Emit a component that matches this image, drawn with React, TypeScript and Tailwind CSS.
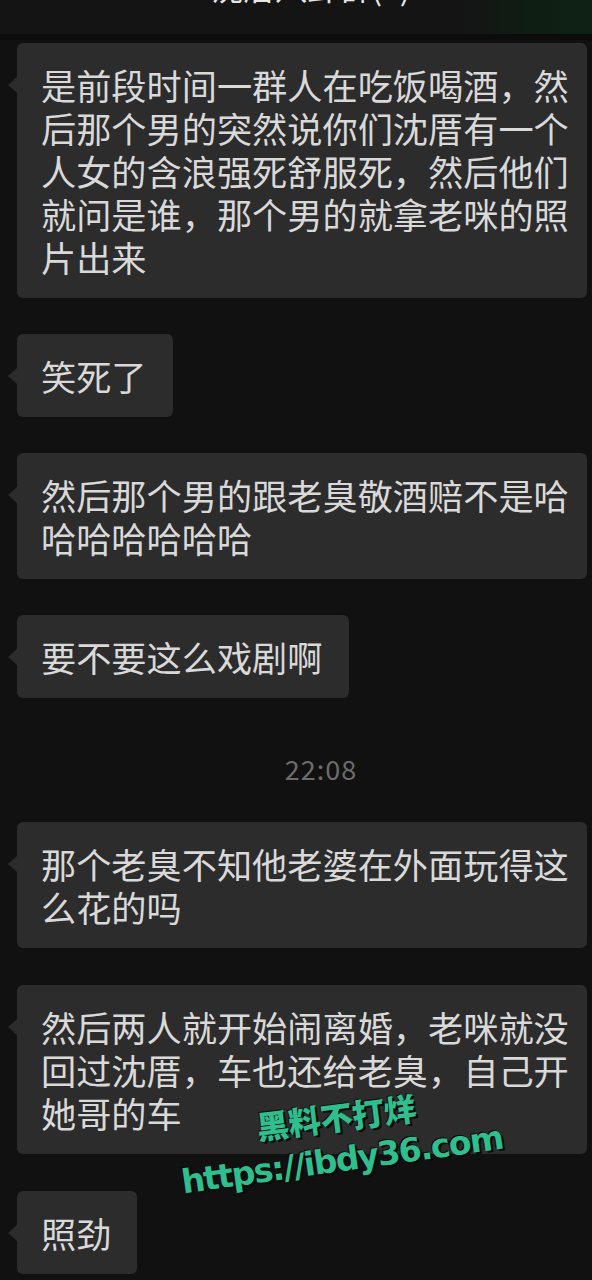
import React from "react";

type Msg = { lines: string[]; wide?: boolean };

const before: Msg[] = [
  {
    lines: [
      "是前段时间一群人在吃饭喝酒，然",
      "后那个男的突然说你们沈厝有一个",
      "人女的含浪强死舒服死，然后他们",
      "就问是谁，那个男的就拿老咪的照",
      "片出来",
    ],
    wide: true,
  },
  { lines: ["笑死了"] },
  { lines: ["然后那个男的跟老臭敬酒赔不是哈", "哈哈哈哈哈哈"], wide: true },
  { lines: ["要不要这么戏剧啊"] },
];

const after: Msg[] = [
  { lines: ["那个老臭不知他老婆在外面玩得这", "么花的吗"], wide: true },
  {
    lines: ["然后两人就开始闹离婚，老咪就没", "回过沈厝，车也还给老臭，自己开", "她哥的车"],
    wide: true,
  },
  { lines: ["照劲"] },
];

const Bubble = ({ msg }: { msg: Msg }) => (
  <div className="flex pl-[17px]">
    <div
      className={`relative rounded-[6px] bg-[#2c2c2c] pl-[24px] py-[20px] text-[35.2px] leading-[43px] text-[#d9d9d9] ${
        msg.wide ? "w-[570px] pr-0" : "pr-[26px]"
      }`}
    >
      {/* tail */}
      <span className="absolute left-[-9px] top-[34px] h-0 w-0 border-y-[8px] border-r-[9px] border-y-transparent border-r-[#2c2c2c]" />
      {msg.lines.map((l, i) => (
        <div key={i} className="whitespace-nowrap">
          {l}
        </div>
      ))}
    </div>
  </div>
);

export default function App() {
  return (
    <div
      className="relative h-[1280px] w-[592px] overflow-hidden bg-[#111111]"
      style={{ fontFamily: '"Noto Sans CJK SC", "Noto Sans", sans-serif' }}
    >
      {/* header, cut off at the top */}
      <div className="relative h-[34px] overflow-hidden bg-[#141414]">
        <div className="absolute right-0 top-0 h-[34px] w-[130px] bg-gradient-to-r from-[#141414] via-[#0f1d13] to-[#0e2114]" />
        <div className="mt-[-31px] pl-[30px] text-center text-[32px] leading-[34px] text-[#e6e6e6]">
          沈厝八卦群(3)
        </div>
      </div>
      <div className="h-[6px] bg-[#0c0c0c]" />

      <div className="flex flex-col pt-[3px]">
        <div className="flex flex-col gap-[36px]">
          {before.map((m, i) => (
            <Bubble key={i} msg={m} />
          ))}
        </div>

        <div className="mt-[56px] h-[30px] pl-[50px] text-center text-[27px] leading-[30px] tracking-[1px] text-[#6c6c6c]">
          22:08
        </div>

        <div className="mt-[38px] flex flex-col gap-[37px]">
          {after.map((m, i) => (
            <Bubble key={i} msg={m} />
          ))}
        </div>
      </div>

      {/* watermark */}
      <div
        className="absolute left-[256px] top-[1100px] -rotate-[7deg] whitespace-nowrap text-[32px] font-black leading-none text-[#2fbf8e] [text-shadow:2px_2px_0_#0a0a0a,-1px_-1px_0_#0a0a0a,0.6px_0_0_#2fbf8e]"
        style={{ fontFamily: '"Noto Sans CJK SC", sans-serif' }}
      >
        黑料不打烊
      </div>
      <div
        className="absolute left-[180px] top-[1143px] -rotate-[8deg] whitespace-nowrap text-[33px] font-bold leading-none tracking-[-1.5px] text-[#2fbf8e] [text-shadow:2px_2px_0_#0a0a0a,-1px_-1px_0_#0a0a0a]"
        style={{ fontFamily: '"DejaVu Sans", sans-serif' }}
      >
        https://ibdy36.com
      </div>
    </div>
  );
}
